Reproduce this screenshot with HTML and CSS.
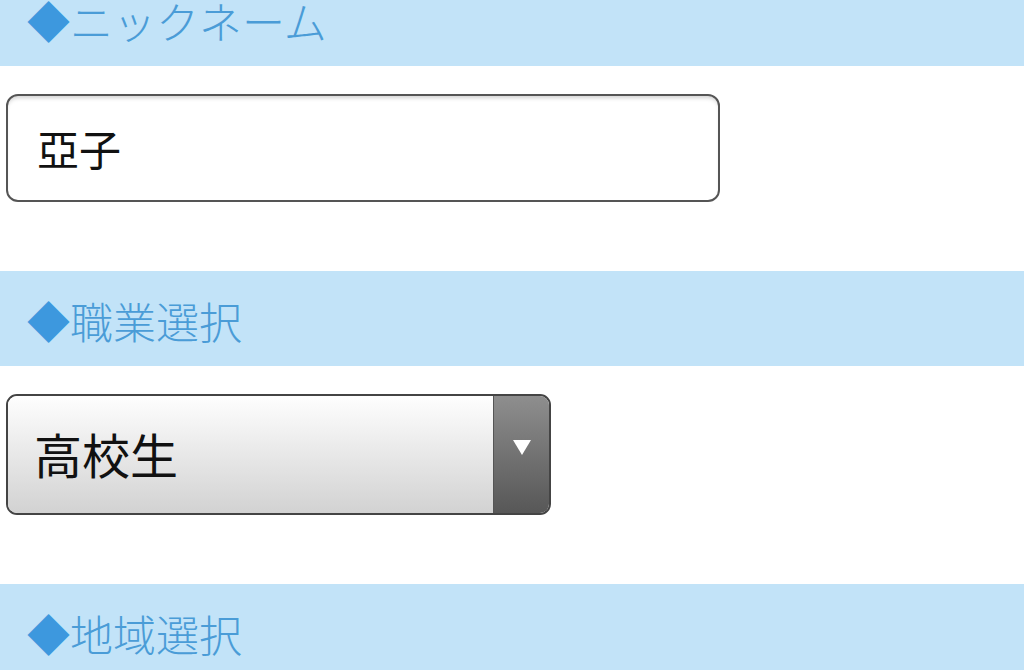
FILE: index.html
```html
<!DOCTYPE html>
<html lang="ja">
<head>
<meta charset="utf-8">
<link rel="stylesheet" href="styles.css">
</head>
<body>
<div class="page">
  <div class="band band-first"><span class="dia">◆</span>ニックネーム</div>
  <div class="field">
    <div class="textbox">亞子</div>
  </div>
  <div class="band"><span class="dia">◆</span>職業選択</div>
  <div class="field">
    <div class="select">
      <div class="select-value">高校生</div>
      <div class="select-btn"><svg width="18" height="15" viewBox="0 0 18 15"><polygon points="0,0 18,0 9,15" fill="#fff"/></svg></div>
    </div>
  </div>
  <div class="band"><span class="dia">◆</span>地域選択</div>
</div>
</body>
</html>
```
FILE: styles.css
```css
html, body {
  margin: 0;
  padding: 0;
  background: #fff;
  overflow: hidden;
}
.page {
  font-family: "Noto Sans CJK JP", "Noto Sans", sans-serif;
  width: 1024px;
  height: 670px;
  overflow: hidden;
}
.band {
  height: 95px;
  box-sizing: border-box;
  background: #c2e3f8;
  color: #4a9cd7;
  font-size: 43px;
  font-weight: 300;
  line-height: 1;
  padding-left: 27px;
  padding-top: 4px;
  display: flex;
  align-items: center;
}
.band-first {
  margin-top: -29px;
}
.dia {
  color: #3d98de;
  font-weight: 400;
}
.field {
  padding: 28px 0 69px 6px;
}
.textbox {
  width: 714px;
  height: 108px;
  box-sizing: border-box;
  border: 2px solid #555;
  border-radius: 12px;
  box-shadow: inset 0 4px 4px -2px rgba(0,0,0,0.18);
  font-size: 42px;
  color: #111;
  display: flex;
  align-items: center;
  padding-left: 29px;
  padding-bottom: 1px;
}
.select {
  width: 545px;
  height: 121px;
  box-sizing: border-box;
  border: 2px solid #444;
  border-radius: 11px;
  overflow: hidden;
  display: flex;
}
.select-value {
  flex: 1;
  background: linear-gradient(#fefefe, #d2d2d2);
  font-size: 48px;
  color: #111;
  display: flex;
  align-items: center;
  padding-left: 26px;
  padding-bottom: 4px;
  border-right: 1px solid #555;
}
.select-btn {
  width: 55px;
  background: linear-gradient(#8e8e8e, #575757);
  display: flex;
  justify-content: center;
  padding-top: 44px;
  box-sizing: border-box;
}
.select-btn svg {
  display: block;
}
```
